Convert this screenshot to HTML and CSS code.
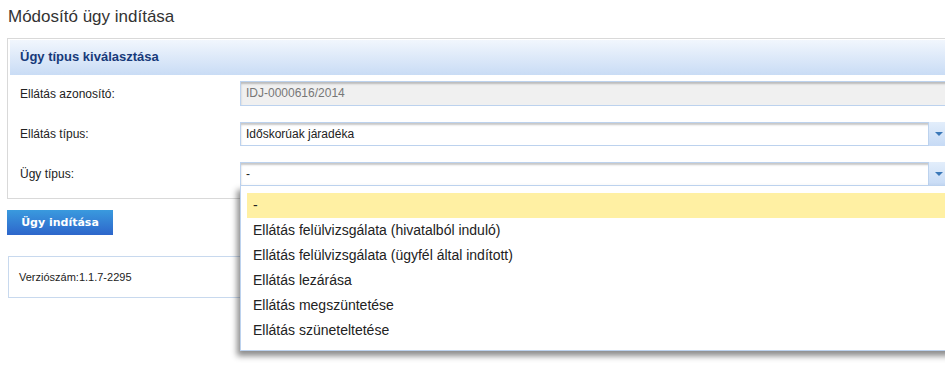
FILE: index.html
```html
<!DOCTYPE html>
<html lang="hu">
<head>
    <meta charset="UTF-8">
    <title>Módosító ügy indítása</title>
    <link rel="stylesheet" href="styles.css">
</head>
<body>
    <h1 class="page-title">Módosító ügy indítása</h1>

    <div class="panel">
        <div class="panel-header">Ügy típus kiválasztása</div>
        <div class="panel-body">
            <div class="form-row">
                <label>Ellátás azonosító:</label>
                <div class="field field-readonly">IDJ-0000616/2014</div>
            </div>
            <div class="form-row">
                <label>Ellátás típus:</label>
                <div class="field field-select">
                    <span class="field-value">Időskorúak járadéka</span>
                    <span class="field-arrow"></span>
                </div>
            </div>
            <div class="form-row">
                <label>Ügy típus:</label>
                <div class="field field-select open">
                    <span class="field-value">-</span>
                    <span class="field-arrow"></span>
                    <ul class="dropdown">
                        <li class="selected">-</li>
                        <li>Ellátás felülvizsgálata (hivatalból induló)</li>
                        <li>Ellátás felülvizsgálata (ügyfél által indított)</li>
                        <li>Ellátás lezárása</li>
                        <li>Ellátás megszüntetése</li>
                        <li>Ellátás szüneteltetése</li>
                    </ul>
                </div>
            </div>
        </div>
    </div>

    <button class="btn-start">Ügy indítása</button>

    <div class="version-box">Verziószám:1.1.7-2295</div>
</body>
</html>
```

FILE: styles.css
```css
html {
    overflow-x: hidden;
}

body {
    margin: 0;
    min-height: 379px;
    background: #fff;
    font-family: 'Liberation Sans', Arial, sans-serif;
    color: #222;
}

.page-title {
    margin: 0;
    padding: 7px 8px 0;
    font-size: 17px;
    font-weight: normal;
    line-height: 20px;
    color: #333;
}

.panel {
    margin: 11px 0 0 7px;
    width: 960px;
    border: 1px solid #d9d9d9;
    padding: 1px 0 0 2px;
}

.panel-header {
    height: 35px;
    line-height: 34px;
    padding-left: 10px;
    font-size: 13px;
    font-weight: bold;
    color: #173a7a;
    background: linear-gradient(to bottom, #f1f6fd, #c9dcf5);
}

.panel-body {
    padding: 6px 0 12px 10px;
}

.form-row {
    display: flex;
    align-items: center;
    height: 24px;
    margin-bottom: 16px;
}

.form-row:first-child {
    height: 25px;
}

.form-row:last-child {
    margin-bottom: 0;
}

.form-row label {
    width: 220px;
    font-size: 12px;
    color: #222;
}

.field {
    position: relative;
    box-sizing: border-box;
    width: 710px;
    height: 100%;
    border: 1px solid #bcd2ee;
    box-shadow: inset 0 2px 2px rgba(0, 0, 0, 0.22);
    font-size: 12px;
    line-height: 22px;
    padding-left: 5px;
    background: #fff;
}

.field-readonly {
    background: #f0f0f0;
    color: #777;
}

.field-select {
    display: flex;
}

.field-value {
    flex: 1;
}

.field-arrow {
    position: relative;
    width: 20px;
    margin-top: -1px;
    margin-bottom: -1px;
    border-left: 1px solid #bcd2ee;
    background: linear-gradient(to bottom, #e3eefb, #c6daf5);
}

.field-arrow::after {
    content: "";
    position: absolute;
    left: 6px;
    top: 10px;
    border-left: 4px solid transparent;
    border-right: 4px solid transparent;
    border-top: 4px solid #3b78b8;
}

.dropdown {
    position: absolute;
    top: 100%;
    left: -1px;
    width: 706px;
    margin: 0;
    padding: 7px 7px 7px 6px;
    list-style: none;
    background: #fff;
    border: 1px solid #bcd2ee;
    box-shadow: -3px 5px 6px rgba(0, 0, 0, 0.45);
    z-index: 10;
}

.dropdown li {
    height: 25px;
    line-height: 25px;
    padding-left: 6px;
    font-size: 14px;
    color: #222;
}

.dropdown li.selected {
    background: #fff0a3;
}

.btn-start {
    display: block;
    margin: 11px 0 0 7px;
    width: 106px;
    height: 25px;
    border: none;
    padding: 0;
    background: linear-gradient(to bottom, #3a9ade, #2d66cb);
    color: #fff;
    font-family: 'DejaVu Sans', Verdana, sans-serif;
    font-size: 11px;
    font-weight: bold;
}

.version-box {
    margin: 21px 0 0 8px;
    width: 960px;
    height: 42px;
    box-sizing: border-box;
    border: 1px solid #c8d9ee;
    padding-left: 10px;
    line-height: 40px;
    font-size: 11px;
    color: #222;
}
```
